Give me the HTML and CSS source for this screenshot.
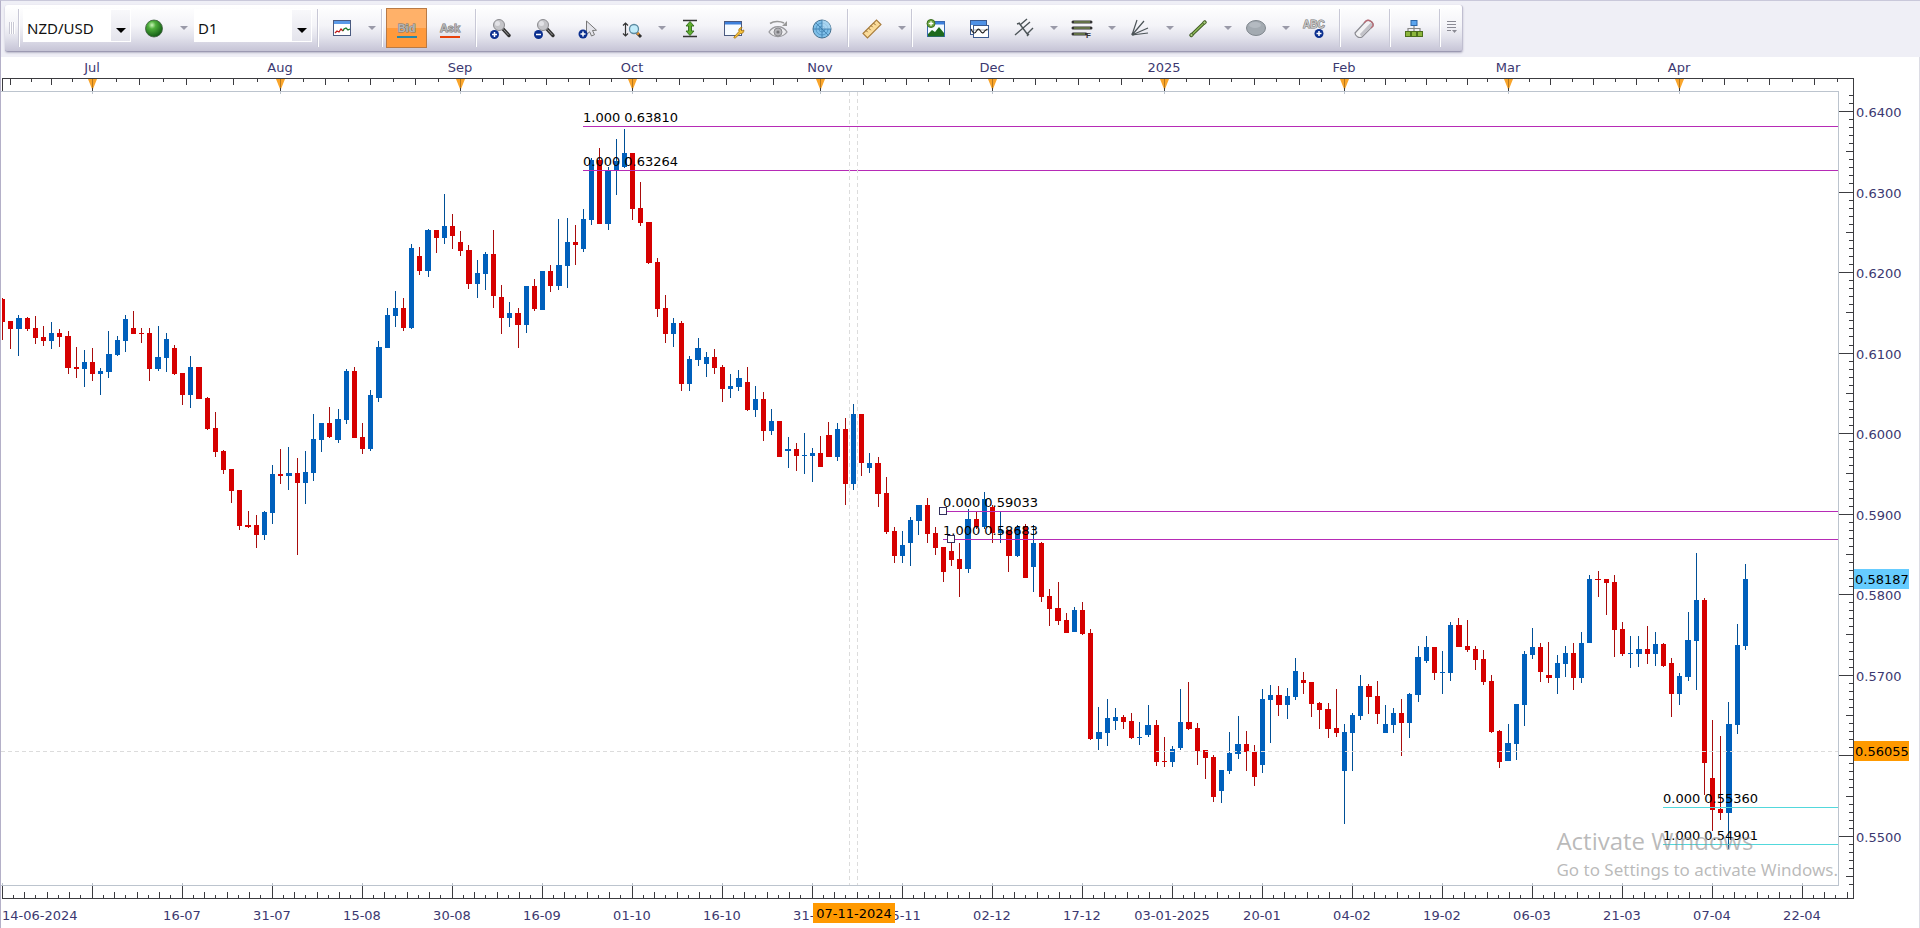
FILE: index.html
```html
<!DOCTYPE html>
<html lang="en">
<head>
  <meta charset="UTF-8">
  <meta name="viewport" content="width=device-width, initial-scale=1.0">
  <title>NZD/USD D1</title>
  <link rel="stylesheet" href="styles.css">
</head>
<body>
  <header class="topbar">
    <div class="toolbar">
      <span class="grip"></span>
      <span class="sep"></span>
      <div class="combo combo-symbol">
        <select aria-label="Symbol">
          <option>NZD/USD</option>
        </select>
      </div>
      <button class="tool" aria-label="Connection">
        <svg class="icon" viewBox="0 0 20 20">
          <defs>
            <radialGradient id="orb" cx="0.38" cy="0.3" r="0.75">
              <stop offset="0" stop-color="#c9f5b8"/>
              <stop offset="0.3" stop-color="#4fae3c"/>
              <stop offset="1" stop-color="#0c5410"/>
            </radialGradient>
          </defs>
          <circle cx="10" cy="9.5" r="8.5" fill="url(#orb)" stroke="#3c5a3c" stroke-width="0.8"/>
        </svg>
      </button>
      <button class="more" aria-label="Connection options"></button>
      <div class="combo combo-period">
        <select aria-label="Period">
          <option>D1</option>
        </select>
      </div>
      <span class="sep"></span>
      <button class="tool" aria-label="Chart type">
        <svg class="icon" viewBox="0 0 20 20">
          <rect x="1.5" y="1.5" width="17" height="15" fill="#fff" stroke="#4a5a80"/>
          <rect x="2" y="2" width="16" height="3" fill="#5b9ae8"/>
          <path d="M3 14l2-2 2 1 2-3 2 2" fill="none" stroke="#c01818" stroke-width="1.3"/>
          <path d="M11 12l1-2 2-1 2 2 2-1" fill="none" stroke="#1a7a2a" stroke-width="1.3"/>
        </svg>
      </button>
      <button class="more" aria-label="Chart type options"></button>
      <span class="sep"></span>
      <button class="tool price-side active"><span class="side-text">Bid</span><i class="bar bar-bid"></i></button>
      <button class="tool price-side"><span class="side-text">Ask</span><i class="bar bar-ask"></i></button>
      <span class="sep"></span>
      <button class="tool" aria-label="Zoom in">
        <svg class="icon" viewBox="0 0 20 20">
          <path d="M13 10l6 6.500" stroke="#333" stroke-width="3.400" stroke-linecap="round"/>
          <path d="M13.500 10.500l5 5.500" stroke="#999" stroke-width="1"/>
          <circle cx="9" cy="6" r="5.500" fill="#c4c4c8" stroke="#8c8c90"/>
          <circle cx="7.500" cy="4.500" r="2.500" fill="#e2e2e6"/>
          <circle cx="4.500" cy="15.500" r="4.500" fill="#0b2f8f"/>
          <path d="M2 15.500h5M4.500 13v5" stroke="#fff" stroke-width="1.500"/>
        </svg>
      </button>
      <button class="tool" aria-label="Zoom out">
        <svg class="icon" viewBox="0 0 20 20">
          <path d="M13 10l6 6.500" stroke="#333" stroke-width="3.400" stroke-linecap="round"/>
          <path d="M13.500 10.500l5 5.500" stroke="#999" stroke-width="1"/>
          <circle cx="9" cy="6" r="5.500" fill="#c4c4c8" stroke="#8c8c90"/>
          <circle cx="7.500" cy="4.500" r="2.500" fill="#e2e2e6"/>
          <circle cx="4.500" cy="15.500" r="4.500" fill="#0b2f8f"/>
          <path d="M2 15.500h5" stroke="#fff" stroke-width="1.500"/>
        </svg>
      </button>
      <button class="tool" aria-label="Pointer">
        <svg class="icon" viewBox="0 0 20 20">
          <path d="M8.500 2v13.500l3.200-2.700 1.800 4.200 3-1.300-2-4.200 4-.3z" fill="#e4e4ea" stroke="#777" stroke-width="1"/>
          <circle cx="5" cy="15" r="4.500" fill="#0b2f8f"/>
          <path d="M2.500 15h5M5 12.500v5" stroke="#fff" stroke-width="1.500"/>
        </svg>
      </button>
      <button class="tool" aria-label="Zoom mode">
        <svg class="icon" viewBox="0 0 20 20">
          <path d="M3.500 4v13M1 6.500L3.500 4 6 6.500M1 14.500L3.500 17 6 14.500" fill="none" stroke="#333" stroke-width="1.200"/>
          <path d="M15 14l4 4" stroke="#333" stroke-width="3"/>
          <path d="M15 13.500l2 2" stroke="#e09030" stroke-width="2.500"/>
          <circle cx="12" cy="10" r="4.500" fill="#c2ecfa" stroke="#5c8aa0" stroke-width="1.300"/>
        </svg>
      </button>
      <button class="more" aria-label="Zoom options"></button>
      <button class="tool" aria-label="Fit vertically">
        <svg class="icon" viewBox="0 0 20 20">
          <path d="M3 1.500h14M3 17.500h14" stroke="#333" stroke-width="1.400"/>
          <path d="M10 2.500l4 4.500h-2.500v5H14l-4 4.500L6 12h2.500V7H6z" fill="#5fae2e" stroke="#2f6a18" stroke-width="0.900"/>
        </svg>
      </button>
      <button class="tool" aria-label="Chart settings">
        <svg class="icon" viewBox="0 0 20 20">
          <rect x="0.500" y="2.500" width="17" height="14" fill="#f6fbff" stroke="#4a5a80"/>
          <rect x="1" y="3" width="16" height="2.500" fill="#3d80dc"/>
          <path d="M10 18l5-5.500c-.8-2.200.8-4.200 3-4l-1.300 2 1.300 1.500 1.800-1c.3 2.500-1.600 4-3.600 3.500l-4.700 4.300c-1 .6-2-.1-1.500-.8z" fill="#f6c33c" stroke="#a87410" stroke-width="0.900"/>
        </svg>
      </button>
      <button class="tool" aria-label="Show or hide">
        <svg class="icon" viewBox="0 0 20 20">
          <path d="M2 4.500C6 2 12 2 16 4" fill="none" stroke="#999" stroke-width="1.600"/>
          <path d="M19 2v5h-5z" fill="#999"/>
          <path d="M1 13c4-7 14-7 18 0-4 6-14 6-18 0z" fill="#ededf0" stroke="#9a9a9e" stroke-width="1.300"/>
          <circle cx="10" cy="13" r="4" fill="#b4b4b8" stroke="#8a8a8e"/>
          <circle cx="10" cy="13" r="1.600" fill="#77777b"/>
        </svg>
      </button>
      <button class="tool" aria-label="Market scanner">
        <svg class="icon" viewBox="0 0 20 20">
          <circle cx="10" cy="10" r="9" fill="#7fbfe8" stroke="#44708f"/>
          <circle cx="10" cy="10" r="6" fill="none" stroke="#4b8fbf" stroke-width="0.800"/>
          <circle cx="10" cy="10" r="3" fill="none" stroke="#4b8fbf" stroke-width="0.800"/>
          <path d="M10 10V1a9 9 0 0 1 9 9z" fill="#c3e4f8" opacity="0.600"/>
          <path d="M10 1v18M1 10h18M10 10L3.500 3.500M10 10l6.500 6.500" stroke="#3a7aa8" stroke-width="0.800"/>
        </svg>
      </button>
      <span class="sep"></span>
      <button class="tool" aria-label="Ruler">
        <svg class="icon" viewBox="0 0 20 20">
          <path d="M1 14.500L14.500 1 19 5.500 5.500 19z" fill="#fbdc9a" stroke="#a87c3c" stroke-width="1.100"/>
          <path d="M4 11.500l1.700 1.700M6.500 9l2.200 2.200M9 6.500l1.700 1.700M11.500 4l2.200 2.200" stroke="#8f6a34" stroke-width="1"/>
        </svg>
      </button>
      <button class="more" aria-label="Ruler options"></button>
      <span class="sep"></span>
      <button class="tool" aria-label="Add picture">
        <svg class="icon" viewBox="0 0 20 20">
          <rect x="1.500" y="2.500" width="17" height="15" fill="#f4faff" stroke="#3a6ab0"/>
          <rect x="2" y="3" width="16" height="2.500" fill="#3d80dc"/>
          <path d="M2 15l4-4 3 2 4-5 5 6v3.500H2z" fill="#1d6a1c"/>
          <circle cx="5" cy="4.500" r="4" fill="#6aa63c" stroke="#3c6e22"/>
          <path d="M2.700 4.500h4.600M5 2.200v4.600" stroke="#fff" stroke-width="1.300"/>
        </svg>
      </button>
      <button class="tool" aria-label="Add indicator">
        <svg class="icon" viewBox="0 0 20 20">
          <rect x="0.500" y="1.500" width="16" height="14" fill="#fff" stroke="#3a5a90"/>
          <rect x="1" y="2" width="15" height="4" fill="#4f92e6"/>
          <rect x="3.500" y="6.500" width="15" height="12" fill="#fff" stroke="#3a5a90"/>
          <path d="M1 11h17" stroke="#999" stroke-width="0.800"/>
          <path d="M1 10c2 5 4 5 5.500 2s3-2 4 0 3 3 4 0l3-2" fill="none" stroke="#222" stroke-width="1.100"/>
        </svg>
      </button>
      <button class="tool" aria-label="Pitchfork">
        <svg class="icon" viewBox="0 0 20 20">
          <path d="M1 16L16 3M5 4l9 12M6 6l7-6M13 15l6-6M3 5l3-1M13 17l2-2" fill="none" stroke="#4c5458" stroke-width="1.400"/>
        </svg>
      </button>
      <button class="more" aria-label="Pitchfork options"></button>
      <button class="tool" aria-label="Fibonacci levels">
        <svg class="icon" viewBox="0 0 20 20">
          <path d="M1 3h18M1 9h18M1 15h13" stroke="#333" stroke-width="3" stroke-linecap="round"/>
          <path d="M2 3h16M2 9h16M2 15h11" stroke="#93b05c" stroke-width="1"/>
          <text class="fib-mark" x="14" y="19">F</text>
        </svg>
      </button>
      <button class="more" aria-label="Fibonacci options"></button>
      <button class="tool" aria-label="Fan">
        <svg class="icon" viewBox="0 0 20 20">
          <path d="M2 16L7 1M2 16L14 2M2 16l16-7M2 16l16-2" fill="none" stroke="#4c5458" stroke-width="1.200"/>
          <circle cx="3" cy="15" r="1.500" fill="#4c5458"/>
        </svg>
      </button>
      <button class="more" aria-label="Fan options"></button>
      <button class="tool" aria-label="Line">
        <svg class="icon" viewBox="0 0 20 20">
          <path d="M3 16.500L17 3" stroke="#3f5a24" stroke-width="3.200" stroke-linecap="round"/>
          <path d="M3 16.500L17 3" stroke="#8fba58" stroke-width="1.400"/>
          <circle cx="3.500" cy="16" r="1.600" fill="#a8cc7c" stroke="#3f5a24" stroke-width="0.800"/>
          <circle cx="16.500" cy="3.500" r="1.600" fill="#a8cc7c" stroke="#3f5a24" stroke-width="0.800"/>
        </svg>
      </button>
      <button class="more" aria-label="Line options"></button>
      <button class="tool" aria-label="Ellipse">
        <svg class="icon" viewBox="0 0 20 20">
          <ellipse cx="10" cy="9" rx="9.500" ry="7.500" fill="#a3aab1" stroke="#80878e"/>
          <ellipse cx="9" cy="6" rx="6" ry="3" fill="#b4bac1"/>
        </svg>
      </button>
      <button class="more" aria-label="Shape options"></button>
      <button class="tool" aria-label="Text">
        <svg class="icon" viewBox="0 0 20 20">
          <text class="abc-mark" x="-1" y="9">ABC</text>
          <circle cx="15" cy="14.500" r="4.500" fill="#0b2f8f"/>
          <path d="M12.500 14.500h5M15 12v5" stroke="#fff" stroke-width="1.500"/>
        </svg>
      </button>
      <span class="sep"></span>
      <button class="tool" aria-label="Eraser">
        <svg class="icon" viewBox="0 0 20 20">
          <path d="M1 14L12 2c2.500-2 8 1 7 5L8 18c-3 1.500-7-1-7-4z" fill="#f2f2f4" stroke="#8a8a90" stroke-width="1.200"/>
          <path d="M8 17.500L18.500 7c0-1.500-.5-2.500-1.500-3.500L6 15c.2 1 1 2 2 2.500z" fill="#c2c2c8"/>
          <path d="M10 4l2-2c2.500-2 8 1 7 5l-2 2" fill="none" stroke="#b86a74" stroke-width="1.300"/>
        </svg>
      </button>
      <span class="sep"></span>
      <button class="tool" aria-label="Object tree">
        <svg class="icon" viewBox="0 0 20 20">
          <path d="M10 6v6M4 12V9.500h12V12" fill="none" stroke="#888" stroke-width="1.200"/>
          <rect x="7" y="1.500" width="6" height="5" fill="#5aa4ee" stroke="#2c66a8"/>
          <rect x="1.500" y="12.500" width="5" height="5" fill="#8cb63c" stroke="#4c6e1c"/>
          <rect x="7.500" y="12.500" width="5" height="5" fill="#8cb63c" stroke="#4c6e1c"/>
          <rect x="13.500" y="12.500" width="5" height="5" fill="#8cb63c" stroke="#4c6e1c"/>
        </svg>
      </button>
      <span class="sep"></span>
      <button class="overflow" aria-label="Toolbar options">
        <svg class="icon-small" viewBox="0 0 10 14">
          <path d="M0 1.500h9M0 4.500h9M0 7.500h9M0 10.500h4" stroke="#8a8a94"/>
          <path d="M5 10h5l-2.500 3z" fill="#8a8a94"/>
        </svg>
      </button>
    </div>
  </header>

  <main class="chart">
    <svg class="axis-months" id="months"></svg>
    <div class="plot">
      <svg class="plot-canvas" id="plot"></svg>
      <div class="watermark">
        <p class="watermark-title">Activate Windows</p>
        <p class="watermark-text">Go to Settings to activate Windows.</p>
      </div>
    </div>
    <svg class="axis-dates" id="dates"></svg>
    <svg class="axis-prices" id="prices"></svg>
  </main>

  <script src="chart.js"></script>
</body>
</html>
```

FILE: styles.css
```css
* {
  box-sizing: border-box;
}
body {
  margin: 0;
  height: 100vh;
  display: flex;
  flex-direction: column;
  background-color: #fff;
  font-family: "DejaVu Sans", Verdana, sans-serif;
  font-size: 13px;
  overflow: hidden;
}

/* toolbar */
.topbar {
  flex: none;
  height: 57px;
  padding: 4px 4px;
  display: flex;
  align-items: flex-start;
  background-color: #efeff6;
  border-top: 1px solid #c9c8da;
  border-left: 1px solid #b4b0c8;
}
.toolbar {
  display: flex;
  align-items: center;
  height: 47px;
  padding: 0 0 0 4px;
  background: linear-gradient(#ffffff, #f4f4f8 45%, #e2e2ec 70%, #c6c4d6);
  border-bottom: 1px solid #9c9ab2;
  border-right: 1px solid #c0bed0;
  border-radius: 3px;
  box-shadow: 0 1px 2px #b8b6c8;
}
.grip {
  width: 6px;
  height: 12px;
  background: repeating-linear-gradient(90deg, #c8c8d4 0 1px, #fff 1px 2px);
}
.sep {
  width: 6px;
  height: 38px;
  background: linear-gradient(90deg, transparent 3px, #c8c8d6 3px 4px, #fff 4px 5px, transparent 5px);
}
.combo {
  position: relative;
  height: 33px;
}
.combo::after {
  content: "";
  position: absolute;
  right: 5px;
  top: 19px;
  border: 5px solid transparent;
  border-top-color: #000;
  border-bottom: none;
  pointer-events: none;
}
.combo select {
  appearance: none;
  width: 100%;
  height: 33px;
  padding: 4px 0 0 3px;
  border: 1px solid #fff;
  border-radius: 0;
  background: linear-gradient(#f8f8fb, #e4e4ec) right / 19px 100% no-repeat #fff;
  color: #111;
  font-family: "Noto Sans", "Open Sans", sans-serif;
  font-size: 15px;
}
.combo-symbol {
  width: 108px;
  margin: 0 1px 5px 2px;
}
.combo-period {
  width: 118px;
  margin: 0 2px 5px 4px;
}
.tool {
  width: 44px;
  height: 40px;
  padding: 2px 0 0;
  border: none;
  background: none;
  display: flex;
  flex-direction: column;
  align-items: center;
  justify-content: center;
}
.icon {
  width: 20px;
  height: 20px;
  overflow: visible;
}
.icon-small {
  width: 10px;
  height: 14px;
}
.more {
  width: 14px;
  height: 40px;
  padding: 0;
  border: none;
  background: none;
}
.more::after {
  content: "";
  display: block;
  width: 0;
  margin-left: 4px;
  border: 4px solid transparent;
  border-top-color: #9a9aa8;
  border-bottom: none;
}
.price-side {
  gap: 1px;
}
.price-side.active {
  width: 41px;
  margin: 0 1px 0 2px;
  border: 1px solid #b97a45;
  background: linear-gradient(#ffb169 0 50%, #ff9a3c 50%);
}
.side-text {
  font-size: 11px;
  font-weight: bold;
  line-height: 14px;
  color: #b4b4b4;
  -webkit-text-stroke: 1px #777;
  paint-order: stroke fill;
}
.bar {
  width: 20px;
  height: 2px;
}
.bar-bid {
  background-color: #2786a8;
}
.bar-ask {
  background-color: #e8420c;
}
.fib-mark {
  font-size: 8px;
  font-weight: bold;
  fill: #333;
}
.abc-mark {
  font-size: 10px;
  font-weight: bold;
  fill: #c4c4c4;
  stroke: #777;
  stroke-width: 1px;
  paint-order: stroke;
}
.overflow {
  width: 20px;
  height: 40px;
  padding: 0;
  border: none;
  background: none;
}

/* chart */
.chart {
  flex: 1;
  min-height: 0;
  display: grid;
  grid-template-columns: minmax(0, 1fr) 80px;
  grid-template-rows: 34px minmax(0, 1fr) 42px;
  border-left: 1px solid #b4b0c8;
  border-right: 1px solid #dcdce4;
}
.axis-months,
.axis-dates,
.axis-prices,
.plot-canvas {
  display: block;
  width: 100%;
  height: 100%;
  shape-rendering: crispEdges;
}
.axis-months {
  grid-area: 1 / 1 / 2 / 3;
}
.axis-dates {
  grid-area: 3 / 1 / 4 / 3;
}
.axis-prices {
  grid-area: 1 / 2 / 4 / 3;
}
.plot {
  grid-area: 2 / 1 / 3 / 2;
  position: relative;
  border: 1px solid #bcc4ce;
  border-left: none;
}
.axis {
  fill: #3c3c40;
}
.soft-tick {
  fill: #bcc4ce;
}
.marker {
  fill: #f9a52b;
  shape-rendering: auto;
}
.marker-line {
  fill: #b8781c;
}
.label {
  fill: #3b3870;
}
.middle {
  text-anchor: middle;
}
.up {
  fill: #0060bc;
}
.down {
  fill: #d60000;
}
.wick-up {
  fill: #004f96;
}
.wick-down {
  fill: #a80c0c;
}
.level-purple {
  fill: #b62bb6;
}
.level-cyan {
  fill: #52d8dc;
}
.level-text,
.badge-text {
  fill: #000;
}
.handle {
  fill: #fff;
  stroke: #33305c;
}
.cross {
  stroke: #dcdcdc;
  stroke-dasharray: 4 3;
}
.badge-last {
  fill: #66ccff;
}
.badge-cursor {
  fill: #ff9900;
}
.watermark {
  position: absolute;
  right: 0;
  bottom: 2px;
  color: rgba(140, 140, 140, 0.6);
}
.watermark p {
  margin: 0;
}
.watermark-title {
  font-family: "Open Sans", "Noto Sans", sans-serif;
  font-size: 24px;
  line-height: 32px;
}
.watermark-text {
  font-family: "Noto Sans", "Open Sans", sans-serif;
  font-size: 17px;
  line-height: 26px;
}
```

FILE: chart.js
```js
const NS = "http://www.w3.org/2000/svg";
const BAR = 90 / 11;

// [high, open, close, low] per bar, in window pixels (so open > close is a rising bar)
const bars = [
  [298,299,322,340],[321,321,329,349],[315,329,318,356],[317,318,329,331],[316,328,338,344],
  [326,337,341,346],[322,341,333,349],[329,333,337,347],[331,336,368,374],[347,367,369,378],
  [350,369,362,387],[348,362,374,381],[368,374,371,395],[331,372,354,378],[336,355,340,356],
  [315,341,319,352],[311,328,334,334],[328,333,334,343],[328,333,369,381],[326,369,357,371],
  [333,358,339,372],[345,348,374,375],[373,373,395,405],[356,395,367,408],[367,367,399,399],
  [397,398,429,430],[412,428,452,457],[450,451,470,474],[469,469,491,503],[490,490,526,530],
  [511,525,527,528],[515,525,535,548],[511,535,512,540],[465,513,474,524],[449,474,476,484],
  [447,476,473,490],[458,473,483,555],[451,483,472,504],[414,473,439,481],[423,440,423,452],
  [407,423,437,438],[409,440,419,443],[369,420,371,424],[367,371,438,438],[423,437,449,454],
  [390,449,395,451],[341,398,347,402],[308,348,315,348],[291,316,308,327],[298,308,328,331],
  [244,328,248,329],[247,256,271,275],[229,271,230,277],[230,230,238,253],[194,238,226,244],
  [214,226,236,249],[231,242,251,256],[245,250,284,289],[260,284,273,298],[252,274,254,290],
  [230,254,296,308],[285,297,318,334],[302,318,313,327],[308,313,325,348],[286,325,286,333],
  [279,286,309,311],[271,310,271,310],[265,271,286,292],[219,286,265,290],[218,266,242,288],
  [225,242,245,265],[209,249,219,252],[158,220,160,225],[148,160,224,224],[167,224,171,230],
  [139,171,161,195],[129,167,153,168],[153,153,209,220],[182,208,223,226],[222,222,263,264],
  [258,262,309,317],[295,308,334,343],[318,334,323,347],[321,323,384,391],[356,384,359,391],
  [338,360,348,366],[352,364,357,377],[349,357,368,374],[365,367,389,402],[374,389,386,398],
  [370,387,378,391],[367,382,410,411],[386,410,399,417],[392,399,431,441],[409,431,421,435],
  [421,421,457,457],[437,451,449,468],[443,449,456,471],[433,456,455,474],[448,456,453,482],
  [436,453,467,467],[422,435,457,457],[423,457,429,461],[418,429,484,505],[404,484,414,490],
  [414,414,463,476],[453,468,463,473],[457,463,494,507],[477,493,532,534],[527,531,556,563],
  [531,556,545,563],[517,543,520,566],[505,521,505,535],[498,505,534,543],[527,533,548,555],
  [547,547,572,582],[543,551,560,566],[543,559,569,597],[509,569,519,573],[512,519,527,529],
  [492,527,499,529],[505,507,533,543],[512,533,530,543],[530,530,556,572],[525,556,527,557],
  [524,526,578,578],[525,567,543,592],[542,543,597,602],[589,596,609,626],[582,608,621,625],
  [613,620,633,633],[607,632,610,632],[602,610,634,635],[629,633,739,740],[707,739,732,750],
  [699,733,718,746],[708,721,717,730],[715,717,722,729],[713,721,738,739],[722,738,737,745],
  [705,735,725,737],[720,725,762,766],[737,761,762,767],[746,762,749,767],[689,748,722,750],
  [682,722,729,730],[723,728,751,765],[750,750,758,779],[755,757,797,802],[770,791,770,803],
  [732,771,753,774],[716,754,744,759],[731,744,752,771],[745,752,777,786],[689,765,699,773],
  [685,700,695,743],[686,695,705,716],[688,705,696,719],[658,697,671,700],[672,680,683,694],
  [682,682,704,717],[702,703,710,729],[703,709,729,738],[689,728,733,737],[724,771,732,824],
  [713,733,715,771],[675,716,686,720],[684,686,697,714],[681,696,714,724],[705,733,724,733],
  [708,725,713,733],[699,713,723,756],[693,723,694,738],[646,695,657,702],[636,661,647,663],
  [647,647,673,680],[651,673,672,694],[622,673,625,681],[618,625,647,647],[620,646,650,652],
  [646,649,660,670],[650,659,682,685],[675,681,732,733],[730,731,762,768],[724,761,743,761],
  [704,744,704,760],[651,705,654,726],[628,655,647,659],[643,647,672,682],[642,675,678,683],
  [655,678,663,694],[646,664,653,677],[643,653,678,690],[632,678,643,683],[575,643,579,643],
  [571,579,580,597],[579,579,583,615],[575,582,630,657],[622,629,654,656],[636,654,653,668],
  [636,654,649,667],[626,649,654,664],[632,654,644,666],[643,644,666,667],[658,663,694,717],
  [673,694,676,705],[612,677,640,681],[553,641,600,690],[598,600,763,795],[720,778,810,831],
  [736,809,813,820],[702,813,724,849],[624,725,645,734],[564,646,579,650]
];

// month name and the index of its first bar
const months = [
  ["", -9], ["Jul", 11], ["Aug", 34], ["Sep", 56], ["Oct", 77], ["Nov", 100], ["Dec", 121],
  ["2025", 142], ["Feb", 164], ["Mar", 184], ["Apr", 205], ["", 227]
];

const dates = [
  "14-06-2024", "", "16-07", "31-07", "15-08", "30-08", "16-09", "01-10", "16-10", "31-10",
  "15-11", "02-12", "17-12", "03-01-2025", "20-01", "04-02", "19-02", "06-03", "21-03",
  "07-04", "22-04"
];

const levels = [
  { x: 583, y: 126, text: "1.000 0.63810", color: "purple" },
  { x: 583, y: 170, text: "0.000 0.63264", color: "purple" },
  { x: 943, y: 511, text: "0.000 0.59033", color: "purple", handle: 943 },
  { x: 943, y: 539, text: "1.000 0.58683", color: "purple", handle: 951 },
  { x: 1663, y: 807, text: "0.000 0.55360", color: "cyan" },
  { x: 1663, y: 844, text: "1.000 0.54901", color: "cyan" }
];

const priceBadges = [
  { y: 569, text: "0.58187", cls: "badge-last" },
  { y: 741, text: "0.56055", cls: "badge-cursor" }
];

const RIGHT = 1853;

// every pane draws in window coordinates, shifted by its own corner
function pane(id, left, top) {
  const g = document.createElementNS(NS, "g");
  g.setAttribute("transform", `translate(${-left} ${-top})`);
  document.getElementById(id).appendChild(g);
  return g;
}

function add(parent, tag, attrs, text) {
  const el = document.createElementNS(NS, tag);
  for (const key in attrs) {
    el.setAttribute(key, attrs[key]);
  }
  if (text) {
    el.textContent = text;
  }
  parent.appendChild(el);
}

function rect(parent, cls, x, y, width, height) {
  add(parent, "rect", { class: cls, x, y, width, height });
}

function label(parent, cls, x, y, text) {
  add(parent, "text", { class: cls, x, y }, text);
}

const barX = i => Math.floor(2.6 + i * BAR);

function drawPlot() {
  const g = pane("plot", 1, 92);

  for (let i = 0; i < dates.length; i++) {
    rect(g, "soft-tick", 2 + i * 90, 883, 1, 2);
  }
  months.forEach(m => rect(g, "soft-tick", barX(m[1]), 92, 1, 2));

  bars.forEach(([high, open, close, low], i) => {
    const dir = open > close ? "up" : "down";
    const left = Math.floor(0.5 + i * BAR);
    const right = Math.floor(0.5 + (i + 1) * BAR) - 3;
    const x = Math.max(left, 2);
    rect(g, "wick-" + dir, barX(i), high, 1, low - high);
    rect(g, dir, x, Math.min(open, close), right - x, Math.abs(open - close));
  });

  levels.forEach(l => {
    rect(g, "level-" + l.color, l.x, l.y, 1838 - l.x, 1);
    label(g, "level-text", l.x, l.y - 4, l.text);
    if (l.handle) {
      rect(g, "handle", l.handle - 3.5, l.y - 3.5, 7, 7);
    }
  });

  add(g, "path", { class: "cross", d: "M1 751.5H1838M849.500 92V885M857.500 92V885" });
}

function drawMonths() {
  const g = pane("months", 1, 57);
  rect(g, "axis", 2, 78, RIGHT - 2, 1);
  rect(g, "axis", 2, 78, 1, 13);
  for (let m = 0; m < months.length - 1; m++) {
    const start = 2.5 + months[m][1] * BAR;
    const step = (months[m + 1][1] - months[m][1]) * BAR / 8;
    for (let k = 1; k < 8; k++) {
      const x = Math.floor(start + k * step);
      if (x > 2 && x < RIGHT) {
        rect(g, "axis", x, 79, 1, k % 2 ? 3 : 6);
      }
    }
    if (months[m][0]) {
      const x = barX(months[m][1]);
      add(g, "path", { class: "marker", d: `M${x - 4} 79h9l-4 10h-1z` });
      rect(g, "marker-line", x, 79, 1, 9);
      rect(g, "axis", x, 88, 1, 3);
      label(g, "label middle", x, 72, months[m][0]);
    }
  }
}

function drawDates() {
  const g = pane("dates", 1, 886);
  rect(g, "axis", 2, 898, RIGHT - 1, 1);
  dates.forEach((text, i) => {
    for (let k = 0; k < 8; k++) {
      const x = Math.floor(2 + i * 90 + k * 11.25);
      const height = k === 0 ? 12 : k % 2 ? 3 : 6;
      if (x < RIGHT) {
        rect(g, "axis", x, 898 - height, 1, height);
      }
    }
    if (i === 0) {
      label(g, "label", 2, 920, text);
    } else {
      label(g, "label middle", 2 + i * 90, 920, text);
    }
  });
  rect(g, "badge-cursor", 813, 903, 82, 20);
  label(g, "badge-text middle", 854, 918, "07-11-2024");
}

function drawPrices() {
  const g = pane("prices", 1839, 57);
  rect(g, "axis", RIGHT, 78, 1, 821);
  for (let k = -2; k <= 96; k++) {
    const y = Math.floor(111.5 + k * 8.053);
    const width = k % 10 === 0 ? 14 : k % 5 === 0 ? 7 : 4;
    rect(g, "axis", RIGHT - width, y, width, 1);
    // no label where a badge already sits on the tick
    const covered = priceBadges.some(b => y > b.y && y < b.y + 20);
    if (k % 10 === 0 && !covered) {
      label(g, "label", 1856, y + 6, (0.64 - k / 1000).toFixed(4));
    }
  }
  priceBadges.forEach(b => {
    rect(g, b.cls, RIGHT + 1, b.y, 55, 20);
    label(g, "badge-text", RIGHT + 2, b.y + 15, b.text);
  });
}

drawPlot();
drawMonths();
drawDates();
drawPrices();
```
